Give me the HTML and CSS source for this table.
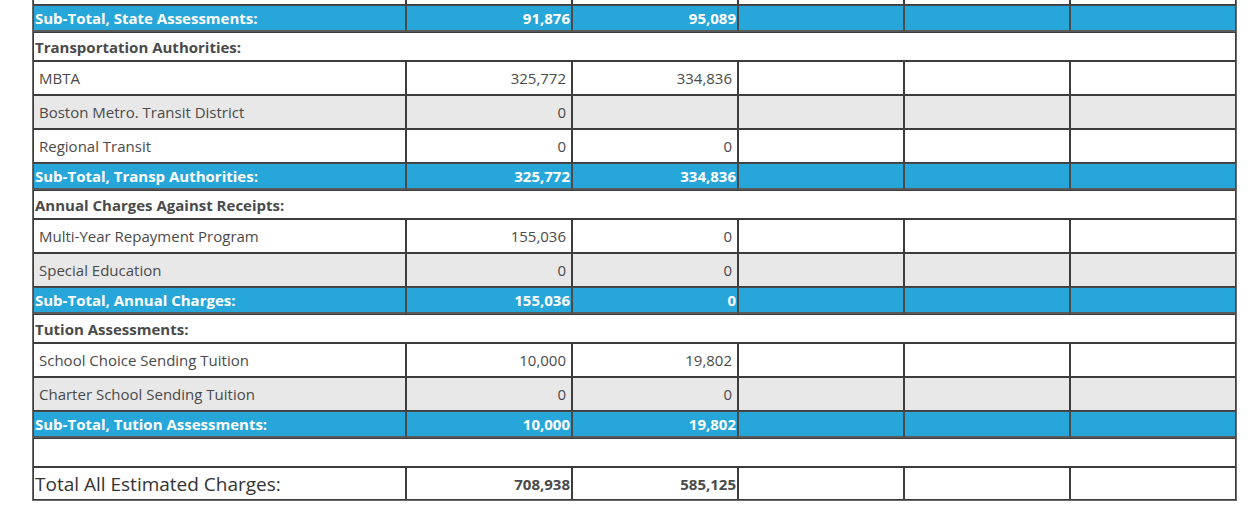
FILE: index.html
```html
<!DOCTYPE html>
<html lang="en">
<head>
<meta charset="utf-8">
<title>Estimated Charges</title>
<link rel="stylesheet" href="styles.css">
</head>
<body>
<div class="page">
<table class="charges">
  <colgroup>
    <col class="c-label"><col class="c-num"><col class="c-num"><col class="c-num"><col class="c-num"><col class="c-num">
  </colgroup>
  <tbody>
    <tr class="data">
      <td class="label"></td><td class="num"></td><td class="num"></td><td></td><td></td><td></td>
    </tr>
    <tr class="sub">
      <td class="label">Sub-Total, State Assessments:</td><td class="num">91,876</td><td class="num">95,089</td><td></td><td></td><td></td>
    </tr>
    <tr class="head">
      <td colspan="6">Transportation Authorities:</td>
    </tr>
    <tr class="data">
      <td class="label">MBTA</td><td class="num">325,772</td><td class="num">334,836</td><td></td><td></td><td></td>
    </tr>
    <tr class="data alt">
      <td class="label">Boston Metro. Transit District</td><td class="num">0</td><td class="num"></td><td></td><td></td><td></td>
    </tr>
    <tr class="data">
      <td class="label">Regional Transit</td><td class="num">0</td><td class="num">0</td><td></td><td></td><td></td>
    </tr>
    <tr class="sub">
      <td class="label">Sub-Total, Transp Authorities:</td><td class="num">325,772</td><td class="num">334,836</td><td></td><td></td><td></td>
    </tr>
    <tr class="head">
      <td colspan="6">Annual Charges Against Receipts:</td>
    </tr>
    <tr class="data">
      <td class="label">Multi-Year Repayment Program</td><td class="num">155,036</td><td class="num">0</td><td></td><td></td><td></td>
    </tr>
    <tr class="data alt">
      <td class="label">Special Education</td><td class="num">0</td><td class="num">0</td><td></td><td></td><td></td>
    </tr>
    <tr class="sub">
      <td class="label">Sub-Total, Annual Charges:</td><td class="num">155,036</td><td class="num">0</td><td></td><td></td><td></td>
    </tr>
    <tr class="head">
      <td colspan="6">Tution Assessments:</td>
    </tr>
    <tr class="data">
      <td class="label">School Choice Sending Tuition</td><td class="num">10,000</td><td class="num">19,802</td><td></td><td></td><td></td>
    </tr>
    <tr class="data alt">
      <td class="label">Charter School Sending Tuition</td><td class="num">0</td><td class="num">0</td><td></td><td></td><td></td>
    </tr>
    <tr class="sub">
      <td class="label">Sub-Total, Tution Assessments:</td><td class="num">10,000</td><td class="num">19,802</td><td></td><td></td><td></td>
    </tr>
    <tr class="spacer">
      <td colspan="6"></td>
    </tr>
    <tr class="total">
      <td class="label">Total All Estimated Charges:</td><td class="num">708,938</td><td class="num">585,125</td><td></td><td></td><td></td>
    </tr>
  </tbody>
</table>
</div>
</body>
</html>
```

FILE: styles.css
```css
html, body {
  margin: 0;
  padding: 0;
  background: #ffffff;
}

.page {
  padding-left: 32px;
  font-family: "Open Sans", "Noto Sans", sans-serif;
  color: #4a4a4a;
}

.charges {
  margin-top: -30px;
  width: 1204px;
  border-collapse: separate;
  border-spacing: 0;
  border: 1px solid #6a6a6a;
  table-layout: fixed;
}

.c-label { width: 373px; }
.c-num { width: 166px; }

.charges td {
  border: 1px solid #3c3c3c;
  padding: 0 5px;
  font-size: 15px;
  white-space: nowrap;
  overflow: hidden;
}

.charges td.num {
  text-align: right;
}

.data td {
  height: 32px;
  background: #ffffff;
}

.data.alt td {
  background: #e8e8e8;
}

.sub td {
  height: 24px;
  background: #26a6d9;
  color: #ffffff;
  font-weight: bold;
  padding: 0 1px;
  border-color: #4a4a4a;
  border-bottom: 2px solid #5a5a5a;
}

.head td {
  height: 27px;
  font-weight: bold;
  padding: 0 1px;
  border-color: #3c3c3c;
}

.spacer td {
  height: 27px;
}

.total td {
  height: 31px;
  font-weight: bold;
  padding: 0 1px;
}

.total td.label {
  font-size: 19px;
  font-weight: 400;
  color: #333333;
}
```
